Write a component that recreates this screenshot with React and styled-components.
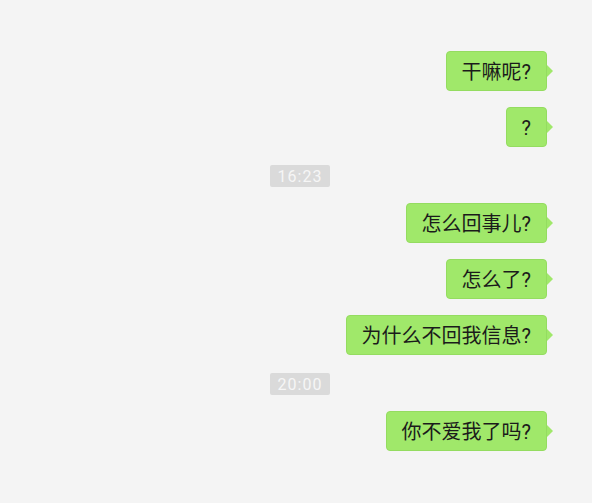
import React from 'react';
import styled, { createGlobalStyle } from 'styled-components';

const GlobalStyle = createGlobalStyle`
  html, body {
    margin: 0;
    padding: 0;
    background: #f4f4f4;
  }
  body {
    font-family: Roboto, "Noto Sans CJK SC", sans-serif;
  }
`;

const ChatWindow = styled.div`
  width: 592px;
  height: 503px;
  box-sizing: border-box;
  padding: 51px 45px 0 0;
  display: flex;
  flex-direction: column;
  gap: 16px;
  background: #f4f4f4;
  overflow: hidden;
`;

const MessageRow = styled.div`
  display: flex;
  justify-content: flex-end;
`;

const Bubble = styled.div`
  position: relative;
  height: 40px;
  box-sizing: border-box;
  padding: 1px 15px 0;
  display: flex;
  align-items: center;
  background: #a0e86a;
  border: 1px solid #94dc60;
  border-radius: 4px;
  color: #1b1b1b;
  font-size: 20px;
  line-height: 24px;

  &::after {
    content: '';
    position: absolute;
    right: -7px;
    top: 50%;
    margin-top: -6px;
    border-style: solid;
    border-width: 6px 0 6px 6px;
    border-color: transparent transparent transparent #a0e86a;
  }
`;

const TimeRow = styled.div`
  display: flex;
  justify-content: center;
  padding-left: 53px;
  margin-top: 2px;
`;

const TimeStamp = styled.span`
  width: 60px;
  height: 22px;
  display: flex;
  align-items: center;
  justify-content: center;
  background: #dadada;
  border-radius: 2px;
  color: #f6f6f6;
  font-size: 16px;
  letter-spacing: 1px;
`;

const messages = [
  { type: 'msg', text: '干嘛呢?' },
  { type: 'msg', text: '?' },
  { type: 'time', text: '16:23' },
  { type: 'msg', text: '怎么回事儿?' },
  { type: 'msg', text: '怎么了?' },
  { type: 'msg', text: '为什么不回我信息?' },
  { type: 'time', text: '20:00' },
  { type: 'msg', text: '你不爱我了吗?' },
];

export default function App() {
  return (
    <>
      <GlobalStyle />
      <ChatWindow>
        {messages.map((m, i) =>
          m.type === 'time' ? (
            <TimeRow key={i}>
              <TimeStamp>{m.text}</TimeStamp>
            </TimeRow>
          ) : (
            <MessageRow key={i}>
              <Bubble>{m.text}</Bubble>
            </MessageRow>
          )
        )}
      </ChatWindow>
    </>
  );
}
